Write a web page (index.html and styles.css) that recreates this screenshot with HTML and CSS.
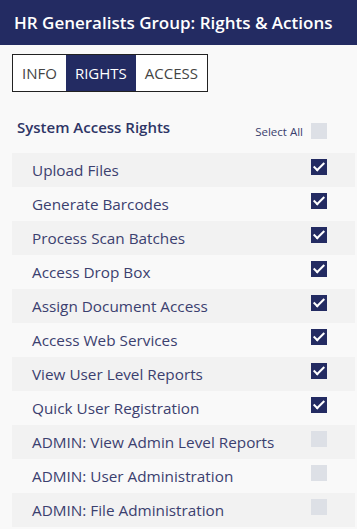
FILE: index.html
```html
<!DOCTYPE html>
<html lang="en">
<head>
    <meta charset="UTF-8">
    <meta name="viewport" content="width=device-width, initial-scale=1.0">
    <title>Rights &amp; Actions</title>
    <link rel="stylesheet" href="styles.css">
</head>
<body>
    <!-- Page Header -->
    <header class="header">
        <h1>HR Generalists Group: Rights &amp; Actions</h1>
    </header>

    <!-- Tabs -->
    <nav class="tabs">
        <a href="#">INFO</a>
        <a href="#" class="active">RIGHTS</a>
        <a href="#">ACCESS</a>
    </nav>

    <!-- Rights List -->
    <section class="rights">
        <div class="rights-head">
            <h2>System Access Rights</h2>
            <label class="select-all">
                <span>Select All</span>
                <span class="box"></span>
            </label>
        </div>

        <ul class="rights-list">
            <li><span>Upload Files</span><span class="box checked"></span></li>
            <li><span>Generate Barcodes</span><span class="box checked"></span></li>
            <li><span>Process Scan Batches</span><span class="box checked"></span></li>
            <li><span>Access Drop Box</span><span class="box checked"></span></li>
            <li><span>Assign Document Access</span><span class="box checked"></span></li>
            <li><span>Access Web Services</span><span class="box checked"></span></li>
            <li><span>View User Level Reports</span><span class="box checked"></span></li>
            <li><span>Quick User Registration</span><span class="box checked"></span></li>
            <li><span>ADMIN: View Admin Level Reports</span><span class="box"></span></li>
            <li><span>ADMIN: User Administration</span><span class="box"></span></li>
            <li><span>ADMIN: File Administration</span><span class="box"></span></li>
        </ul>
    </section>
</body>
</html>
```

FILE: styles.css
```css
/* General Reset */
body, h1, h2, ul, li {
    margin: 0;
    padding: 0;
    box-sizing: border-box;
}

body {
    font-family: 'Open Sans', 'Noto Sans', sans-serif;
    background-color: #f9f9f9;
    color: #333;
}

/* Header */
.header {
    height: 45px;
    background-color: #232b62;
    display: flex;
    align-items: center;
    padding: 0 14px;
}

.header h1 {
    color: #ffffff;
    font-size: 17px;
    font-weight: 600;
}

/* Tabs */
.tabs {
    display: flex;
    width: max-content;
    margin: 9px 0 0 12px;
    border: 1px solid #222;
    height: 38px;
    box-sizing: border-box;
}

.tabs a {
    display: flex;
    align-items: center;
    padding: 0 9px;
    font-size: 15px;
    color: #444;
    text-decoration: none;
    background-color: #fff;
}

.tabs a.active {
    background-color: #232b62;
    color: #fff;
}

/* Rights Section */
.rights {
    padding: 0 2px 0 12px;
}

.rights-head {
    display: flex;
    justify-content: space-between;
    align-items: flex-start;
    padding: 25px 28px 0 5px;
    height: 61px;
    box-sizing: border-box;
}

.rights-head h2 {
    font-size: 15px;
    font-weight: 600;
    color: #2e3566;
}

.select-all {
    display: flex;
    align-items: center;
    gap: 8px;
    font-size: 11.5px;
    color: #3a3f6e;
    margin-top: 6px;
}

.rights-list {
    list-style: none;
}

.rights-list li {
    height: 34px;
    display: flex;
    align-items: center;
    justify-content: space-between;
    padding: 0 28px 0 20px;
    font-size: 15.3px;
    color: #3b406f;
}

.rights-list li:nth-child(odd) {
    background-color: #f2f2f2;
}

/* Checkboxes */
.box {
    width: 16px;
    height: 16px;
    background-color: #dde0e6;
    display: inline-block;
    position: relative;
    margin-top: -6px;
}

.select-all .box {
    margin-top: 0;
}

.box.checked {
    background-color: #232b62;
}

.box.checked::after {
    content: "";
    position: absolute;
    left: 5px;
    top: 1px;
    width: 4px;
    height: 9px;
    border: solid #fff;
    border-width: 0 2.5px 2.5px 0;
    transform: rotate(45deg);
}
```
